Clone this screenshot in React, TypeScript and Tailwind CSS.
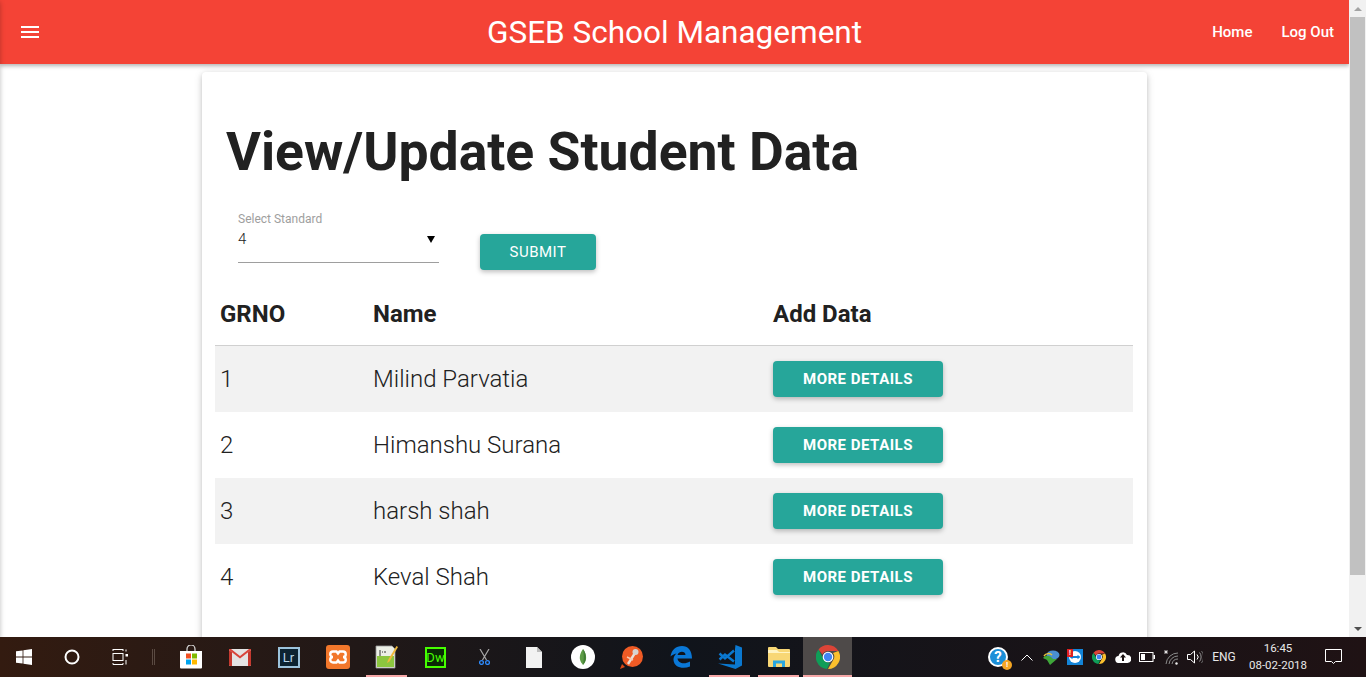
import { MdMenu } from 'react-icons/md'

const students = [
  { id: 1, name: 'Milind Parvatia' },
  { id: 2, name: 'Himanshu Surana' },
  { id: 3, name: 'harsh shah' },
  { id: 4, name: 'Keval Shah' },
]

function WindowsIcon() {
  return (
    <svg width="16" height="16" viewBox="0 0 16 16" fill="#fff">
      <path d="M0 2.3 6.6 1.4V7.6H0ZM7.4 1.3 16 0V7.6H7.4ZM0 8.4H6.6V14.6L0 13.7ZM7.4 8.4H16V16L7.4 14.7Z" />
    </svg>
  )
}

function CortanaIcon() {
  return (
    <svg width="16" height="16" viewBox="0 0 16 16" fill="none">
      <circle cx="8" cy="8" r="6.5" stroke="#fff" strokeWidth="2" />
    </svg>
  )
}

function TaskViewIcon() {
  return (
    <svg width="17" height="16" viewBox="0 0 17 16" fill="none" stroke="#fff" strokeWidth="1">
      <path d="M1 .5H11M11 0V2M1 0V2" />
      <rect x="1" y="4.5" width="10" height="7" />
      <path d="M1 14V15.5H11V14" />
      <path d="M14 .5V2.5M14 11V15.5" />
      <rect x="13.5" y="5" width="2.5" height="2.5" fill="#fff" stroke="none" />
    </svg>
  )
}

function StoreIcon() {
  return (
    <svg width="24" height="24" viewBox="0 0 24 24">
      <path d="M8 7V4a4 4 0 0 1 8 0v3" fill="none" stroke="#ddd" strokeWidth="1.2" />
      <path d="M1 6H23V22.5A1 1 0 0 1 22 23.5H2A1 1 0 0 1 1 22.5Z" fill="#fff" />
      <rect x="7" y="8.5" width="5" height="5" fill="#f25022" />
      <rect x="13" y="8.5" width="5" height="5" fill="#7fba00" />
      <rect x="7" y="14.5" width="5" height="5" fill="#00a4ef" />
      <rect x="13" y="14.5" width="5" height="5" fill="#ffb900" />
    </svg>
  )
}

function GmailIcon() {
  return (
    <svg width="22" height="17" viewBox="0 0 22 17">
      <rect width="22" height="17" rx="1" fill="#e4e4e4" />
      <path d="M0 1 11 9.5 22 1V0H20L11 7 2 0H0Z" fill="#d9453c" />
      <path d="M0 1 3 3.2V17H1A1 1 0 0 1 0 16ZM22 1 19 3.2V17H21A1 1 0 0 0 22 16Z" fill="#c5392f" />
    </svg>
  )
}

function LightroomIcon() {
  return (
    <div className="flex h-[21px] w-[22px] items-center justify-center border-2 border-[#9cc3dc] bg-[#0c2331] text-[13px] leading-none text-[#b8d6e8]">
      Lr
    </div>
  )
}

function XamppIcon() {
  return (
    <svg width="24" height="24" viewBox="0 0 24 24">
      <rect width="24" height="24" rx="3" fill="#f2772b" />
      <path d="M7 6.5H10.5L12 8.5 13.5 6.5H17A2.5 2.5 0 0 1 17 12 2.5 2.5 0 0 1 17 17.5H13.5L12 15.5 10.5 17.5H7A2.5 2.5 0 0 1 7 12 2.5 2.5 0 0 1 7 6.5Z" fill="none" stroke="#fff" strokeWidth="2.4" />
    </svg>
  )
}

function NotepadIcon() {
  return (
    <svg width="23" height="24" viewBox="0 0 23 24">
      <path d="M1 1H17L20 4V23H1Z" fill="#ecefe6" stroke="#9a9a9a" strokeWidth="0.8" />
      <path d="M2 11H19V22H2Z" fill="#8cc63f" />
      <path d="M5 5V11M7 7H8M9 7H11" stroke="#333" strokeWidth="1" />
      <path d="M21.5 1 13 15 12 18 14.5 16.5 23 2Z" fill="#f0b93a" />
    </svg>
  )
}

function DreamweaverIcon() {
  return (
    <div className="flex h-[21px] w-[21px] items-center justify-center border-2 border-[#46ff00] bg-[#0a2a05] text-[13px] leading-none text-[#46ff00]">
      Dw
    </div>
  )
}

function ScissorsIcon() {
  return (
    <svg width="11" height="16" viewBox="0 0 11 16" fill="none">
      <path d="M1 0 7.5 11M10 0 3.5 11" stroke="#a8a8a8" strokeWidth="1.2" />
      <circle cx="2.5" cy="13.5" r="1.9" stroke="#2f8cff" strokeWidth="1.3" />
      <circle cx="8.5" cy="13.5" r="1.9" stroke="#2f8cff" strokeWidth="1.3" />
    </svg>
  )
}

function FileIcon() {
  return (
    <svg width="16" height="21" viewBox="0 0 16 21">
      <path d="M0 0H11L16 5V21H0Z" fill="#f2f2f2" />
      <path d="M11 0V5H16Z" fill="#bdbdbd" />
    </svg>
  )
}

function MongoIcon() {
  return (
    <svg width="24" height="24" viewBox="0 0 24 24">
      <circle cx="12" cy="12" r="12" fill="#fff" />
      <path d="M12 4C9 8 8.5 12 9 14.5 9.5 17 11 18.5 12 20 13 18.5 14.5 17 15 14.5 15.5 12 15 8 12 4Z" fill="#5d9c47" />
      <path d="M12 4C13 8 13 15 12 20 15 17 16.5 10 12 4Z" fill="#417d35" />
    </svg>
  )
}

function PostmanIcon() {
  return (
    <svg width="24" height="24" viewBox="0 0 24 24">
      <circle cx="12.5" cy="11.5" r="10.5" fill="#ef5b25" />
      <path d="M0 24 2 19 5 22Z" fill="#d84a17" />
      <path d="M8 19 15 8" stroke="#e8e0d8" strokeWidth="2.4" />
      <circle cx="15.5" cy="7" r="3" fill="#d7d3cf" />
      <path d="M7 12 13 15" stroke="#f7c9b0" strokeWidth="1.4" />
    </svg>
  )
}

function EdgeIcon() {
  return (
    <svg width="22" height="22" viewBox="0 0 22 22">
      <path d="M.5 10.5C1.5 4 6 0 12 0 18 0 22 4.500 22 12.500H7.500C8 17 14 19 20 15.500V20.500C13 23.500 4 21.500 3.500 14 3.300 11.500 4.500 9 6.500 7.500 4 8 2 9 .5 10.500ZM7.500 9H15.500C15.500 5 9 4.500 7.500 9Z" fill="#0a78d7" />
    </svg>
  )
}

function VsCodeIcon() {
  return (
    <svg width="24" height="24" viewBox="0 0 24 24" fill="none">
      <path d="M17.500 0 24 2.500V20.500L17.500 24 0 18.500 17 19.500V4Z" fill="#0a78d0" />
      <path d="M1.500 8.500 7 13.500 16 5.500M1.500 14.500 7 9.500 16 16.500" stroke="#0a78d0" strokeWidth="2.400" />
    </svg>
  )
}

function ExplorerIcon() {
  return (
    <svg width="22" height="20" viewBox="0 0 22 20">
      <path d="M0 1A1 1 0 0 1 1 0H8L10 2H21A1 1 0 0 1 22 3V19A1 1 0 0 1 21 20H1A1 1 0 0 1 0 19Z" fill="#f8d775" />
      <path d="M0 3H9L11 5H22V6H0Z" fill="#fff4c2" />
      <path d="M5 20V13.500H17V20H14V16.500H8V20Z" fill="#2aa7e0" />
    </svg>
  )
}

function ChromeIcon({ size }: { size: number }) {
  return (
    <svg width={size} height={size} viewBox="0 0 24 24">
      <path d="M12 0A12 12 0 0 1 22.400 6H12A6 6 0 0 0 6.500 9.500L2.500 4.500A12 12 0 0 1 12 0Z" fill="#db4437" />
      <path d="M22.400 6A12 12 0 0 1 12 24L17.200 15A6 6 0 0 0 17 8Z" fill="#fbc02d" />
      <path d="M2.500 4.500 7 13A6 6 0 0 0 14 17.500L11 24A12 12 0 0 1 2.500 4.500Z" fill="#0f9d58" />
      <circle cx="12" cy="12" r="5.300" fill="#fff" />
      <circle cx="12" cy="12" r="4.200" fill="#4285f4" />
    </svg>
  )
}

function HelpIcon() {
  return (
    <div className="relative flex h-[20px] w-[20px] items-center justify-center rounded-full border-2 border-white bg-[#1b8fd8] text-[15px] font-bold leading-none text-white">
      ?
      <span className="absolute -bottom-[5px] -right-[6px] flex h-[10px] w-[10px] items-center justify-center rounded-full bg-[#f5a623] text-[8px] leading-none text-white">
        !
      </span>
    </div>
  )
}

function IdmIcon() {
  return (
    <svg width="17" height="15" viewBox="0 0 17 15">
      <ellipse cx="10" cy="5" rx="6.500" ry="4.500" fill="#4a8fd0" />
      <path d="M0 8C3 4 8 6 10 9L14 9 7 15 4 10C3 9 1 9 0 8Z" fill="#3fa63a" />
      <path d="M1 6C3 3 7 3 9 5" stroke="#e8c33a" strokeWidth="1.500" fill="none" />
    </svg>
  )
}

function TeamViewerIcon() {
  return (
    <div className="relative">
      <svg width="16" height="16" viewBox="0 0 16 16">
        <rect width="16" height="16" fill="#1384d8" />
        <circle cx="8" cy="8" r="6" fill="#fff" />
        <path d="M2.500 8 5.500 5.800V7H10.500V5.800L13.500 8 10.500 10.200V9H5.500V10.200Z" fill="#1384d8" />
      </svg>
      <span className="absolute left-0 top-0 flex h-[8px] w-[6px] items-center justify-center bg-[#e02020] text-[7px] font-bold leading-none text-white">
        !
      </span>
    </div>
  )
}

function CloudIcon() {
  return (
    <svg width="16" height="12" viewBox="0 0 16 12">
      <path d="M4 12A3.500 3.500 0 0 1 3.500 5 4.500 4.500 0 0 1 12 4 4 4 0 0 1 12.500 12Z" fill="#fff" />
      <path d="M8 3 11 6.500H9V10H7V6.500H5Z" fill="#1c1212" />
    </svg>
  )
}

function BatteryIcon() {
  return (
    <svg width="16" height="10" viewBox="0 0 16 10">
      <rect x=".5" y=".5" width="13.500" height="9" fill="none" stroke="#fff" />
      <rect x="2" y="2" width="4" height="6" fill="#fff" />
      <rect x="14.500" y="3" width="1.500" height="4" fill="#fff" />
    </svg>
  )
}

function WifiIcon() {
  return (
    <svg width="16" height="16" viewBox="0 0 16 16" fill="none" stroke="#8c8c8c">
      <path d="M3 15A12 12 0 0 1 15 4M6 15A9 9 0 0 1 15 7M9 15A6 6 0 0 1 15 10" />
      <circle cx="13.500" cy="14.500" r="1.200" fill="#eee" stroke="none" />
      <path d="M3 1V5M1 3H5M1.500 1.500 4.500 4.500M4.500 1.500 1.500 4.500" stroke="#fff" strokeWidth="0.7" />
    </svg>
  )
}

function VolumeIcon() {
  return (
    <svg width="16" height="14" viewBox="0 0 16 14" fill="none" stroke="#fff">
      <path d="M.5 4.500H3.500L7.500 1V13L3.500 9.500H.5Z" />
      <path d="M10 4.500A3.500 3.500 0 0 1 10 9.500" />
      <path d="M12.500 2.500A7 7 0 0 1 12.500 11.500" stroke="#9a9a9a" />
      <path d="M14.500 1A9.500 9.500 0 0 1 14.500 13" stroke="#6a6a6a" />
    </svg>
  )
}

function NotificationIcon() {
  return (
    <svg width="17" height="16" viewBox="0 0 17 16" fill="none" stroke="#fff">
      <path d="M.5 .5H16.500V12.500H10.500L8.500 14.500 6.500 12.500H.5Z" />
    </svg>
  )
}

function ChevronIcon() {
  return (
    <svg width="12" height="7" viewBox="0 0 12 7" fill="none" stroke="#fff">
      <path d="M.5 6.500 6 1 11.500 6.500" />
    </svg>
  )
}

const appIcons = [
  { key: 'store', icon: <StoreIcon /> },
  { key: 'gmail', icon: <GmailIcon /> },
  { key: 'lr', icon: <LightroomIcon /> },
  { key: 'xampp', icon: <XamppIcon /> },
  { key: 'notepad', icon: <NotepadIcon />, open: true },
  { key: 'dw', icon: <DreamweaverIcon /> },
  { key: 'snip', icon: <ScissorsIcon /> },
  { key: 'file', icon: <FileIcon /> },
  { key: 'mongo', icon: <MongoIcon /> },
  { key: 'postman', icon: <PostmanIcon /> },
  { key: 'edge', icon: <EdgeIcon /> },
  { key: 'code', icon: <VsCodeIcon />, open: true },
  { key: 'explorer', icon: <ExplorerIcon />, open: true },
  { key: 'chrome', icon: <ChromeIcon size={24} />, open: true, active: true },
]

const trayIcons = [
  { key: 'chevron', icon: <ChevronIcon /> },
  { key: 'idm', icon: <IdmIcon /> },
  { key: 'teamviewer', icon: <TeamViewerIcon /> },
  { key: 'chrome', icon: <ChromeIcon size={14} /> },
  { key: 'cloud', icon: <CloudIcon /> },
  { key: 'battery', icon: <BatteryIcon /> },
  { key: 'wifi', icon: <WifiIcon /> },
  { key: 'volume', icon: <VolumeIcon /> },
]

function Taskbar() {
  return (
    <footer className="flex h-10 items-center bg-gradient-to-r from-[#331b10] via-[#10141b] to-[#1f1214] text-white">
      <div className="flex h-10 w-12 items-center justify-center">
        <WindowsIcon />
      </div>
      <div className="flex h-10 w-12 items-center justify-center">
        <CortanaIcon />
      </div>
      <div className="flex h-10 w-12 items-center justify-center">
        <TaskViewIcon />
      </div>
      <div className="ml-2 mr-[11px] h-4 w-[3px] border-x border-[#5a4a42]" />
      {appIcons.map((a) => (
        <div
          key={a.key}
          className={`relative flex h-10 w-[49px] items-center justify-center ${a.active ? 'bg-[#4e4a49]' : ''}`}
        >
          {a.icon}
          {a.open && (
            <span className={`absolute bottom-0 h-[2px] bg-[#f7a8a8] ${a.active ? 'inset-x-0' : 'inset-x-1'}`} />
          )}
        </div>
      ))}
      <div className="ml-auto mr-[15px] flex items-center">
        <div className="flex w-[34px] justify-center">
          <HelpIcon />
        </div>
        {trayIcons.map((t) => (
          <div key={t.key} className="flex w-6 justify-center">
            {t.icon}
          </div>
        ))}
        <span className="w-[34px] text-center text-[12px] text-[#e8e8e8]">ENG</span>
        <div className="flex w-[74px] flex-col items-center text-[11.500px] leading-[17px] text-[#e8e8e8]">
          <span>16:45</span>
          <span>08-02-2018</span>
        </div>
        <div className="flex w-9 justify-center">
          <NotificationIcon />
        </div>
      </div>
    </footer>
  )
}

function Scrollbar() {
  return (
    <div className="flex w-[17px] flex-col items-center bg-[#f1f1f1]">
      <div className="flex h-[17px] items-center justify-center">
        <span className="h-0 w-0 border-x-[4px] border-b-[4px] border-x-transparent border-b-[#a3a3a3]" />
      </div>
      <div className="h-[558px] w-[15px] bg-[#c1c1c1]" />
      <div className="mt-auto flex h-[17px] items-center justify-center">
        <span className="h-0 w-0 border-x-[4px] border-t-[4px] border-x-transparent border-t-[#505050]" />
      </div>
    </div>
  )
}

export default function App() {
  return (
    <div className="h-[677px] overflow-hidden font-['Roboto',sans-serif]">
      <div className="flex h-[637px]">
        <div className="relative flex-1 overflow-hidden bg-white">
          {/* closed sidenav, only its shadow shows on the left edge */}
          <aside className="absolute -left-[300px] top-0 z-20 h-full w-[300px] shadow-[0_2px_5px_rgba(0,0,0,0.26)]" />
          <header className="relative z-10 flex h-16 items-center bg-[#f44336] text-white shadow-[0_2px_4px_rgba(0,0,0,0.3)]">
            <MdMenu className="ml-[18px]" size={24} />
            <span className="absolute left-[487px] pt-[2px] text-[31.500px] leading-none">GSEB School Management</span>
            <nav className="ml-auto mr-[15px] flex gap-[29px] text-[15px] font-medium">
              <a>Home</a>
              <a>Log Out</a>
            </nav>
          </header>
          <main className="mx-auto mt-2 h-[700px] w-[945px] rounded-sm px-[13px] shadow-[0_2px_5px_rgba(0,0,0,0.16),0_2px_10px_rgba(0,0,0,0.12)]">
            <h1 className="ml-[11px] pt-[46px] text-[53.500px] font-bold leading-[67px] text-[#212121]">
              View/Update Student Data
            </h1>
            <div className="mt-[27px] flex items-end">
              <div className="ml-[23px] w-[201px] border-b border-[#9e9e9e]">
                <div className="text-[12px] leading-[14px] text-[#9e9e9e]">Select Standard</div>
                <div className="flex h-[36px] items-start justify-between pr-1 pt-1 text-[15px] font-light leading-[18px] text-[#212121]">
                  <span>4</span>
                  <span className="mt-[6px] h-0 w-0 border-x-[4px] border-t-[7px] border-x-transparent border-t-black" />
                </div>
              </div>
              <button
                type="button"
                className="mb-[-7px] ml-[41px] h-9 w-[116px] rounded-sm bg-[#26a69a] text-[15px] uppercase tracking-[0.5px] text-white shadow-[0_2px_5px_rgba(0,0,0,0.26)]"
              >
                Submit
              </button>
            </div>
            <table className="mt-[19px] w-[918px] table-fixed border-separate border-spacing-0 text-left text-[#212121]">
              <thead>
                <tr className="h-[64px] text-[24px]">
                  <th className="w-[153px] border-b border-[#d0d0d0] pl-[5px] font-bold">GRNO</th>
                  <th className="w-[400px] border-b border-[#d0d0d0] pl-[5px] font-bold">Name</th>
                  <th className="border-b border-[#d0d0d0] pl-[5px] font-bold">Add Data</th>
                </tr>
              </thead>
              <tbody>
                {students.map((s, i) => (
                  <tr key={s.id} className={`h-[66px] text-[24px] font-light ${i % 2 === 0 ? 'bg-[#f2f2f2]' : ''}`}>
                    <td className="pl-[5px]">{s.id}</td>
                    <td className="pl-[5px]">{s.name}</td>
                    <td className="pl-[5px]">
                      <button
                        type="button"
                        className="block h-9 w-[170px] rounded-sm bg-[#26a69a] text-[15px] font-bold uppercase tracking-[0.5px] text-white shadow-[0_2px_5px_rgba(0,0,0,0.26)]"
                      >
                        More Details
                      </button>
                    </td>
                  </tr>
                ))}
              </tbody>
            </table>
          </main>
        </div>
        <Scrollbar />
      </div>
      <Taskbar />
    </div>
  )
}
